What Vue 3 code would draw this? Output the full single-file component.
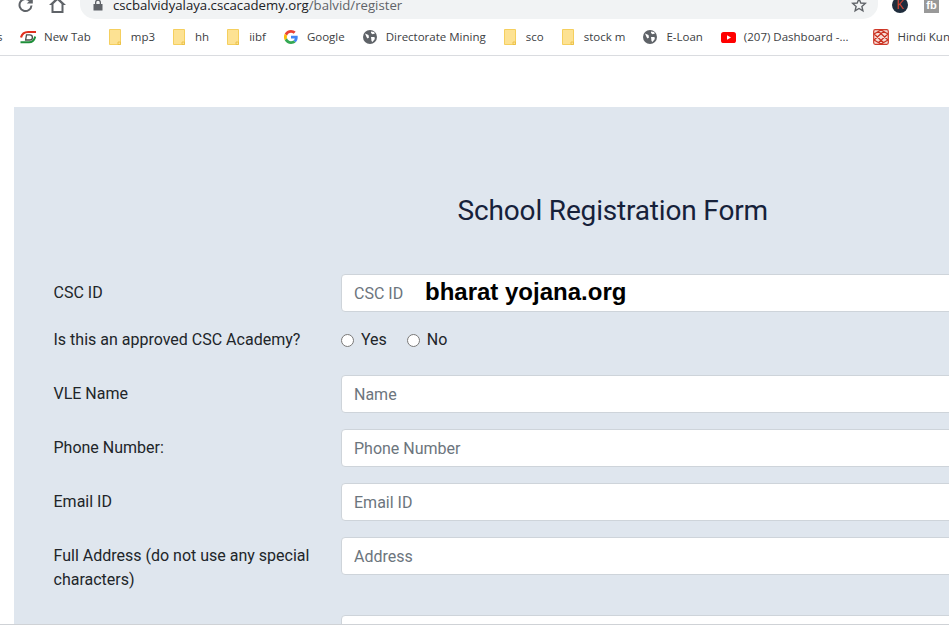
<script setup>
const bookmarks = [
  { icon: 'newtab', label: 'New Tab' },
  { icon: 'folder', label: 'mp3' },
  { icon: 'folder', label: 'hh' },
  { icon: 'folder', label: 'iibf' },
  { icon: 'google', label: 'Google' },
  { icon: 'globe', label: 'Directorate Mining' },
  { icon: 'folder', label: 'sco' },
  { icon: 'folder', label: 'stock m' },
  { icon: 'globe', label: 'E-Loan' },
  { icon: 'yt', label: '(207) Dashboard -...' },
  { icon: 'hindi', label: 'Hindi Kunj' },
]
const fields = [
  { label: 'VLE Name', ph: 'Name' },
  { label: 'Phone Number:', ph: 'Phone Number' },
  { label: 'Email ID', ph: 'Email ID' },
  { label: 'Full Address (do not use any special characters)', ph: 'Address' },
  { label: '', ph: '' },
]
</script>

<template>
  <div class="screen">
    <div class="toolbar">
      <svg class="reload" width="16" height="16" viewBox="0 0 16 16" fill="none">
        <path d="M13.500 8.500A6 6 0 1 1 11.800 3.800" stroke="#5f6368" stroke-width="2"/>
        <path d="M14.800 .5v6H8.800z" fill="#5f6368"/>
      </svg>
      <svg class="home" width="17" height="17" viewBox="0 0 17 17" fill="none">
        <path d="M8.500 0 0 8h2.500v8h12V8H17zM4.500 7 8.500 3.200 12.500 7v7h-8z" fill="#5f6368" fill-rule="evenodd"/>
      </svg>
      <div class="urlbar">
        <svg class="lock" width="10" height="12" viewBox="0 0 10 12">
          <path d="M2 5V3.500a3 3 0 0 1 6 0V5h1.500v6.500H.5V5zM3.300 5h3.400V3.500a1.700 1.700 0 0 0-3.400 0z" fill="#5f6368" fill-rule="evenodd"/>
        </svg>
        <span class="url">cscbalvidyalaya.cscacademy.org<span class="path">/balvid/register</span></span>
        <svg class="star" width="16" height="16" viewBox="0 0 16 16" fill="none">
          <path d="M8 1.800 9.800 6l4.500.4-3.400 3 1 4.400L8 11.500l-3.900 2.300 1-4.400-3.400-3L6.200 6z" stroke="#5f6368" stroke-width="1.400"/>
        </svg>
      </div>
      <span class="avatar">K</span>
      <span class="ext">fb</span>
    </div>

    <div class="bookmarks">
      <span class="cut">s</span>
      <div v-for="b in bookmarks" :key="b.label" class="bm" :class="'bm-' + b.icon">
        <svg v-if="b.icon === 'folder'" width="12" height="16" viewBox="0 0 12 16">
          <path d="M.5.500h11v15H.5z" fill="#fde293" stroke="#f5cf5e"/>
          <path d="M9 13h2.500v2.500H9z" fill="#fde293" stroke="#e9bc3e" stroke-width=".8"/>
        </svg>
        <svg v-else-if="b.icon === 'newtab'" width="16" height="16" viewBox="0 0 16 16" fill="none">
          <path d="M1 8.500C2 4.500 4.500 3 8 3h8" stroke="#e0301e" stroke-width="2.200"/>
          <path d="M6.500 5.800h3.300a2.500 2.500 0 0 1 0 5.200H5.600z" stroke="#4a4f4a" stroke-width="1.300"/>
          <path d="M.5 13.300h8.500c3.500 0 5.500-2.300 6.200-5.800" stroke="#1f8f3a" stroke-width="2"/>
        </svg>
        <svg v-else-if="b.icon === 'google'" width="14" height="14" viewBox="0 0 48 48">
          <path fill="#EA4335" d="M24 9.500c3.500 0 6.700 1.300 9.100 3.500l6.800-6.800C35.800 2.400 30.300 0 24 0 14.600 0 6.500 5.400 2.600 13.200l7.900 6.200C12.400 13.700 17.700 9.500 24 9.500z"/>
          <path fill="#4285F4" d="M47 24.500c0-1.600-.1-3.100-.4-4.500H24v9h12.900c-.6 3-2.200 5.500-4.700 7.200l7.600 5.900C44.300 37.900 47 31.800 47 24.500z"/>
          <path fill="#FBBC05" d="M10.500 28.600A14.500 14.500 0 0 1 10.500 19.400l-7.900-6.200a24 24 0 0 0 0 21.600z"/>
          <path fill="#34A853" d="M24 48c6.500 0 11.900-2.100 15.900-5.900l-7.700-5.900c-2.100 1.400-4.900 2.300-8.200 2.300-6.300 0-11.600-4.200-13.500-9.900l-7.900 6.200C6.500 42.600 14.600 48 24 48z"/>
        </svg>
        <svg v-else-if="b.icon === 'globe'" width="14" height="14" viewBox="0 0 14 14">
          <circle cx="7" cy="7" r="7" fill="#5f6368"/>
          <path d="M2 3.500 5.500 5 6 7.500 4.500 8.500 3.500 7zM8 1.500l3 .5 1 1.500-2.500.8L8 3zM8 7h3.500l.3 2-2.300 3-1-1z" fill="#fff"/>
        </svg>
        <svg v-else-if="b.icon === 'yt'" width="15" height="11" viewBox="0 0 15 11">
          <rect width="15" height="11" rx="2.600" fill="#f00"/>
          <path d="M6 3.200v4.600l4-2.300z" fill="#fff"/>
        </svg>
        <svg v-else width="16" height="16" viewBox="0 0 16 16" fill="none">
          <rect x=".7" y=".7" width="14.600" height="14.600" rx="1.500" fill="#f6dcd6" stroke="#cf3a2a" stroke-width="1.200"/>
          <path d="M1 5 8 1l7 4M1 11l7 4 7-4M1 5l10 9M15 5 5 14M1 11 11 2M15 11 5 2" stroke="#c9301f" stroke-width="1.200"/>
        </svg>
        <span>{{ b.label }}</span>
      </div>
    </div>

    <div class="panel">
      <h1 class="title">School Registration Form</h1>

      <div class="row">
        <label class="lbl">CSC ID</label>
        <div class="ctrl">
          <input class="inp" placeholder="CSC ID" />
          <span class="stamp">bharat yojana.org</span>
        </div>
      </div>

      <div class="row radio-row">
        <label class="lbl">Is this an approved CSC Academy?</label>
        <div class="radios">
          <label class="opt"><input type="radio" name="approved" />Yes</label>
          <label class="opt"><input type="radio" name="approved" />No</label>
        </div>
      </div>

      <div v-for="f in fields" :key="f.ph" class="row">
        <label class="lbl">{{ f.label }}</label>
        <div class="ctrl"><input class="inp" :placeholder="f.ph" /></div>
      </div>
    </div>
  </div>
</template>

<style>
html, body { margin: 0; overflow: hidden; background: #fff; }
</style>

<style scoped>
.screen {
  width: 949px;
  height: 625px;
  overflow: hidden;
  background: #fff;
  box-sizing: border-box;
  border-bottom: 1px solid #cfd2d6;
}
.toolbar {
  height: 19px;
  display: flex;
  align-items: flex-start;
  overflow: hidden;
}
.reload { margin: -3px 0 0 18px; flex: none; }
.home { margin: -3px 0 0 15px; flex: none; }
.urlbar {
  flex: none;
  width: 798px;
  height: 19px;
  margin-left: 14px;
  background: #f1f3f4;
  border-radius: 0 0 15px 15px;
  display: flex;
  align-items: flex-start;
}
.lock { margin: -1px 0 0 13px; flex: none; }
.url {
  margin: -5px 0 0 10px;
  font: 13.2px/20px "Open Sans", sans-serif;
  color: #202124;
  white-space: nowrap;
  flex: 1;
}
.path { color: #5f6368; }
.star { margin: -3px 11px 0 0; flex: none; }
.avatar {
  flex: none;
  width: 16px;
  height: 16px;
  margin: -3px 0 0 14px;
  border-radius: 50%;
  background: #1f2d3d;
  color: #d9482f;
  font: 12px/16px "Noto Sans", sans-serif;
  text-align: center;
}
.ext {
  flex: none;
  width: 15px;
  height: 14px;
  margin: -1px 0 0 16px;
  background: #999;
  color: #fff;
  font: bold 11px/13px "Liberation Sans", sans-serif;
  text-align: center;
}
.bookmarks {
  height: 37px;
  box-sizing: border-box;
  border-bottom: 1px solid #dadce0;
  display: flex;
  align-items: center;
  white-space: nowrap;
  font: 11.5px/16px "Open Sans", sans-serif;
  color: #3c4043;
}
.cut { margin-left: -3px; width: 23px; flex: none; }
.bm {
  display: flex;
  align-items: center;
  gap: 10px;
  margin-right: 18px;
  flex: none;
}
.bm svg { flex: none; }
.bm-newtab { gap: 8px; }
.bm-google { gap: 9px; }
.bm-globe { gap: 9px; }
.bm-yt { gap: 8px; margin-right: 25px; }
.bm-hindi { gap: 8px; }
.panel {
  width: 1198px;
  height: 700px;
  box-sizing: border-box;
  margin: 51px 0 0 14px;
  padding: 87px 40px 0 39.5px;
  background: #dfe6ee;
  font: 16px/24px Roboto, sans-serif;
  color: #212529;
}
.title {
  margin: 0 0 46px;
  font: 400 28px/34px Roboto, sans-serif;
  letter-spacing: -0.17px;
  color: #16213a;
  text-align: center;
}
.row {
  display: grid;
  grid-template-columns: 271.5px 1fr;
  column-gap: 16px;
  margin-bottom: 16px;
}
.lbl { padding: 7px 0; }
.ctrl { position: relative; height: 38px; }
.inp {
  width: 100%;
  height: 38px;
  box-sizing: border-box;
  padding: 0 12px;
  border: 1px solid #ced4da;
  border-radius: 4px;
  background: #fff;
  font: 16px Roboto, sans-serif;
  color: #495057;
}
.inp::placeholder { color: #6c757d; opacity: 1; }
.stamp {
  position: absolute;
  left: 84px;
  top: 3px;
  font: bold 24px/30px "Liberation Sans", sans-serif;
  color: #000;
  white-space: nowrap;
}
.radio-row { margin-bottom: 23px; }
.radio-row .lbl { padding: 0; }
.radios { display: flex; gap: 20px; }
.opt { display: flex; align-items: center; gap: 7px; }
.opt input { width: 13px; height: 13px; margin: 0; }
</style>
